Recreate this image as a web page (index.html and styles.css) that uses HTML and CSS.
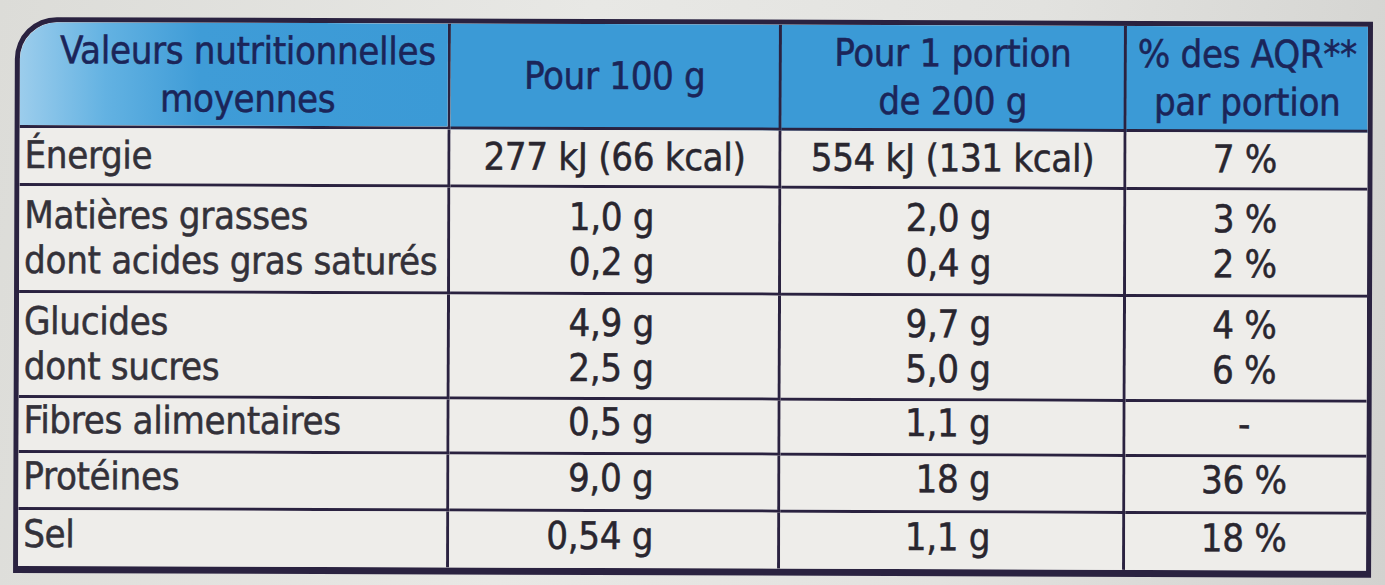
FILE: index.html
```html
<!DOCTYPE html>
<html lang="fr">
<head>
<meta charset="utf-8">
<link rel="stylesheet" href="styles.css">
<title>Valeurs nutritionnelles</title>
</head>
<body>
<div class="photo">
  <table class="nutri">
    <colgroup>
      <col class="c1"><col class="c2"><col class="c3"><col class="c4">
    </colgroup>
    <thead>
      <tr class="r-head">
        <th class="h1">Valeurs nutritionnelles<br>moyennes</th>
        <th>Pour 100 g</th>
        <th>Pour 1 portion<br>de 200 g</th>
        <th class="last">% des AQR**<br>par portion</th>
      </tr>
    </thead>
    <tbody>
      <tr class="r-1">
        <td class="lab">Énergie</td>
        <td class="ctr">277 kJ (66 kcal)</td>
        <td class="ctr">554 kJ (131 kcal)</td>
        <td class="pct last">7 %</td>
      </tr>
      <tr class="r-2">
        <td class="lab">Matières grasses<br>dont acides gras saturés</td>
        <td class="v2">1,0 g<br>0,2 g</td>
        <td class="v3">2,0 g<br>0,4 g</td>
        <td class="pct last">3 %<br>2 %</td>
      </tr>
      <tr class="r-3">
        <td class="lab">Glucides<br>dont sucres</td>
        <td class="v2">4,9 g<br>2,5 g</td>
        <td class="v3">9,7 g<br>5,0 g</td>
        <td class="pct last">4 %<br>6 %</td>
      </tr>
      <tr class="r-4 lift">
        <td class="lab">Fibres alimentaires</td>
        <td class="v2">0,5 g</td>
        <td class="v3">1,1 g</td>
        <td class="pct last">-</td>
      </tr>
      <tr class="r-5 lift">
        <td class="lab">Protéines</td>
        <td class="v2">9,0 g</td>
        <td class="v3">18 g</td>
        <td class="pct last">36 %</td>
      </tr>
      <tr class="r-6 lift bottom">
        <td class="lab">Sel</td>
        <td class="v2">0,54 g</td>
        <td class="v3">1,1 g</td>
        <td class="pct last">18 %</td>
      </tr>
    </tbody>
  </table>
</div>
</body>
</html>
```

FILE: styles.css
```css
html, body {
  margin: 0;
  padding: 0;
}
body {
  width: 1385px;
  height: 585px;
  overflow: hidden;
  background: linear-gradient(100deg, #dcdcd8 0%, #e8e8e5 40%, #e2e2df 70%, #d2d2cf 100%);
  font-family: "DejaVu Sans Condensed", "DejaVu Sans", sans-serif;
}
.photo {
  padding: 17px 0 0 15px;
}
.nutri {
  border-collapse: separate;
  border-spacing: 0;
  table-layout: fixed;
  width: 1358px;
  border: 5px solid #2a2240;
  border-bottom-width: 7px;
  border-top-left-radius: 42px;
  transform: rotate(0.2deg);
  transform-origin: 0 0;
  background: #ecebe8;
  overflow: hidden;
}
.c1 { width: 431px; }
.c2 { width: 331px; }
.c3 { width: 345px; }
.c4 { width: 241px; }

.nutri th, .nutri td {
  border-right: 3px solid #2a2240;
  border-bottom: 3px solid #2a2240;
  padding: 0;
  font-size: 38px;
  line-height: 45px;
  letter-spacing: -0.3px;
  -webkit-text-stroke: 0.5px currentColor;
}
.nutri .last { border-right: none; }
.nutri .bottom td { border-bottom: none; }

.nutri th {
  background: #3b9ad6;
  color: #1b2559;
  font-weight: normal;
  text-align: center;
  vertical-align: middle;
  line-height: 48px;
}
.nutri th.h1 {
  border-top-left-radius: 38px;
  padding-left: 28px;
  background: linear-gradient(90deg, #9ccdec 0%, #63b2e2 20%, #3f9cd7 42%, #3b9ad6 100%);
}
.r-head { height: 106px; }
.r-1 { height: 58px; }
.r-2 { height: 107px; }
.r-3 { height: 105px; }
.r-4 { height: 54px; }
.r-5 { height: 57px; }
.r-6 { height: 56px; }

.nutri td {
  color: #29262f;
  vertical-align: middle;
  background: #eeedea;
}
.nutri .lift td { padding-bottom: 7px; }
.nutri td.lab {
  text-align: left;
  padding-left: 5px;
  color: #333139;
}
.nutri td.ctr { text-align: center; }
.nutri td.v2 { text-align: right; padding-right: 124px; }
.nutri td.v3 { text-align: right; padding-right: 132px; }
.nutri td.pct { text-align: center; padding-right: 4px; }
```
